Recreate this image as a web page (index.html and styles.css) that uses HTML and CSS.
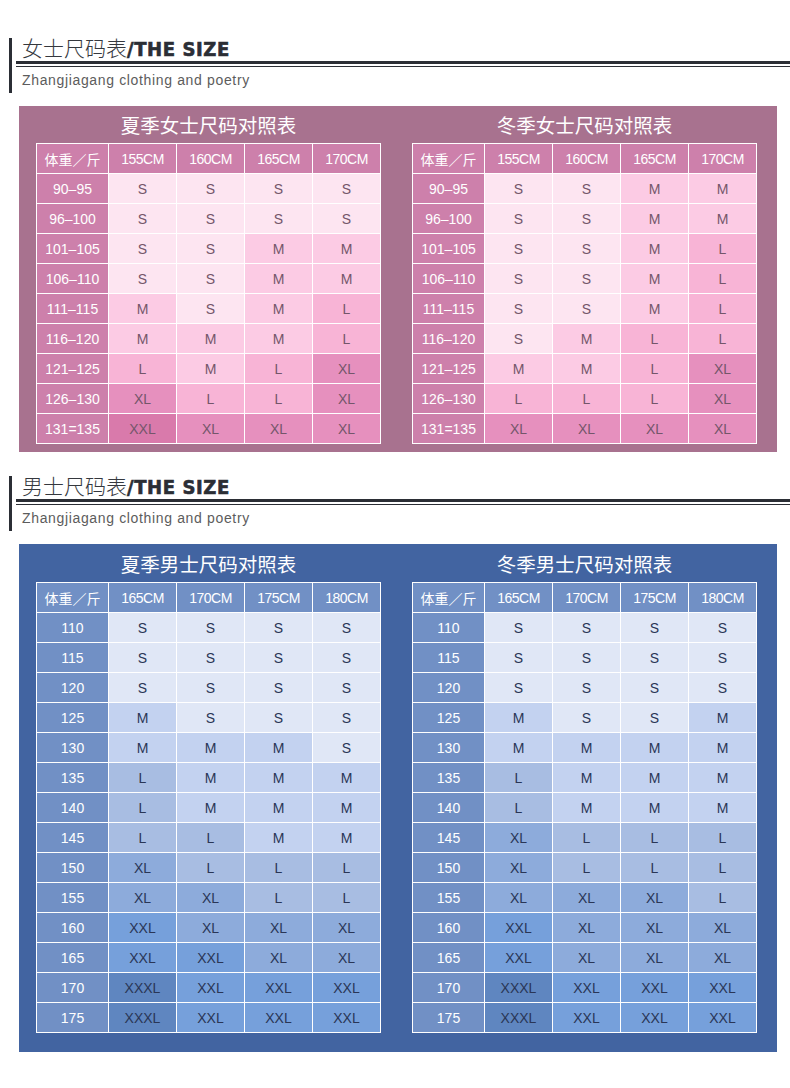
FILE: index.html
```html
<!DOCTYPE html>
<html lang="zh-CN">
<head>
<meta charset="utf-8">
<title>尺码表</title>
<link rel="stylesheet" href="styles.css">
</head>
<body>

<section class="sec-head first">
  <div class="title">女士尺码表<span class="en">/THE SIZE</span></div>
  <div class="rule"></div>
  <div class="sub">Zhangjiagang clothing and poetry</div>
</section>

<div class="panel pink">
  <div class="block">
    <div class="cap">夏季女士尺码对照表</div>
    <table class="chart">
      <colgroup><col class="c0"><col><col><col><col></colgroup>
      <tr class="head"><td>体重／斤</td><td>155CM</td><td>160CM</td><td>165CM</td><td>170CM</td></tr>
      <tr><th>90–95</th><td class="s">S</td><td class="s">S</td><td class="s">S</td><td class="s">S</td></tr>
      <tr><th>96–100</th><td class="s">S</td><td class="s">S</td><td class="s">S</td><td class="s">S</td></tr>
      <tr><th>101–105</th><td class="s">S</td><td class="s">S</td><td class="m">M</td><td class="m">M</td></tr>
      <tr><th>106–110</th><td class="s">S</td><td class="s">S</td><td class="m">M</td><td class="m">M</td></tr>
      <tr><th>111–115</th><td class="m">M</td><td class="s">S</td><td class="m">M</td><td class="l">L</td></tr>
      <tr><th>116–120</th><td class="m">M</td><td class="m">M</td><td class="m">M</td><td class="l">L</td></tr>
      <tr><th>121–125</th><td class="l">L</td><td class="m">M</td><td class="l">L</td><td class="xl">XL</td></tr>
      <tr><th>126–130</th><td class="xl">XL</td><td class="l">L</td><td class="l">L</td><td class="xl">XL</td></tr>
      <tr><th>131=135</th><td class="xxl">XXL</td><td class="xl">XL</td><td class="xl">XL</td><td class="xl">XL</td></tr>
    </table>
  </div>
  <div class="block">
    <div class="cap">冬季女士尺码对照表</div>
    <table class="chart">
      <colgroup><col class="c0"><col><col><col><col></colgroup>
      <tr class="head"><td>体重／斤</td><td>155CM</td><td>160CM</td><td>165CM</td><td>170CM</td></tr>
      <tr><th>90–95</th><td class="s">S</td><td class="s">S</td><td class="m">M</td><td class="m">M</td></tr>
      <tr><th>96–100</th><td class="s">S</td><td class="s">S</td><td class="m">M</td><td class="m">M</td></tr>
      <tr><th>101–105</th><td class="s">S</td><td class="s">S</td><td class="m">M</td><td class="l">L</td></tr>
      <tr><th>106–110</th><td class="s">S</td><td class="s">S</td><td class="m">M</td><td class="l">L</td></tr>
      <tr><th>111–115</th><td class="s">S</td><td class="s">S</td><td class="m">M</td><td class="l">L</td></tr>
      <tr><th>116–120</th><td class="s">S</td><td class="m">M</td><td class="l">L</td><td class="l">L</td></tr>
      <tr><th>121–125</th><td class="m">M</td><td class="m">M</td><td class="l">L</td><td class="xl">XL</td></tr>
      <tr><th>126–130</th><td class="l">L</td><td class="l">L</td><td class="l">L</td><td class="xl">XL</td></tr>
      <tr><th>131=135</th><td class="xl">XL</td><td class="xl">XL</td><td class="xl">XL</td><td class="xl">XL</td></tr>
    </table>
  </div>
</div>

<section class="sec-head second">
  <div class="title">男士尺码表<span class="en">/THE SIZE</span></div>
  <div class="rule"></div>
  <div class="sub">Zhangjiagang clothing and poetry</div>
</section>

<div class="panel blue">
  <div class="block">
    <div class="cap">夏季男士尺码对照表</div>
    <table class="chart">
      <colgroup><col class="c0"><col><col><col><col></colgroup>
      <tr class="head"><td>体重／斤</td><td>165CM</td><td>170CM</td><td>175CM</td><td>180CM</td></tr>
      <tr><th>110</th><td class="s">S</td><td class="s">S</td><td class="s">S</td><td class="s">S</td></tr>
      <tr><th>115</th><td class="s">S</td><td class="s">S</td><td class="s">S</td><td class="s">S</td></tr>
      <tr><th>120</th><td class="s">S</td><td class="s">S</td><td class="s">S</td><td class="s">S</td></tr>
      <tr><th>125</th><td class="m">M</td><td class="s">S</td><td class="s">S</td><td class="s">S</td></tr>
      <tr><th>130</th><td class="m">M</td><td class="m">M</td><td class="m">M</td><td class="s">S</td></tr>
      <tr><th>135</th><td class="l">L</td><td class="m">M</td><td class="m">M</td><td class="m">M</td></tr>
      <tr><th>140</th><td class="l">L</td><td class="m">M</td><td class="m">M</td><td class="m">M</td></tr>
      <tr><th>145</th><td class="l">L</td><td class="l">L</td><td class="m">M</td><td class="m">M</td></tr>
      <tr><th>150</th><td class="xl">XL</td><td class="l">L</td><td class="l">L</td><td class="l">L</td></tr>
      <tr><th>155</th><td class="xl">XL</td><td class="xl">XL</td><td class="l">L</td><td class="l">L</td></tr>
      <tr><th>160</th><td class="xxl">XXL</td><td class="xl">XL</td><td class="xl">XL</td><td class="xl">XL</td></tr>
      <tr><th>165</th><td class="xxl">XXL</td><td class="xxl">XXL</td><td class="xl">XL</td><td class="xl">XL</td></tr>
      <tr><th>170</th><td class="xxxl">XXXL</td><td class="xxl">XXL</td><td class="xxl">XXL</td><td class="xxl">XXL</td></tr>
      <tr><th>175</th><td class="xxxl">XXXL</td><td class="xxl">XXL</td><td class="xxl">XXL</td><td class="xxl">XXL</td></tr>
    </table>
  </div>
  <div class="block">
    <div class="cap">冬季男士尺码对照表</div>
    <table class="chart">
      <colgroup><col class="c0"><col><col><col><col></colgroup>
      <tr class="head"><td>体重／斤</td><td>165CM</td><td>170CM</td><td>175CM</td><td>180CM</td></tr>
      <tr><th>110</th><td class="s">S</td><td class="s">S</td><td class="s">S</td><td class="s">S</td></tr>
      <tr><th>115</th><td class="s">S</td><td class="s">S</td><td class="s">S</td><td class="s">S</td></tr>
      <tr><th>120</th><td class="s">S</td><td class="s">S</td><td class="s">S</td><td class="s">S</td></tr>
      <tr><th>125</th><td class="m">M</td><td class="s">S</td><td class="s">S</td><td class="m">M</td></tr>
      <tr><th>130</th><td class="m">M</td><td class="m">M</td><td class="m">M</td><td class="m">M</td></tr>
      <tr><th>135</th><td class="l">L</td><td class="m">M</td><td class="m">M</td><td class="m">M</td></tr>
      <tr><th>140</th><td class="l">L</td><td class="m">M</td><td class="m">M</td><td class="m">M</td></tr>
      <tr><th>145</th><td class="xl">XL</td><td class="l">L</td><td class="l">L</td><td class="l">L</td></tr>
      <tr><th>150</th><td class="xl">XL</td><td class="l">L</td><td class="l">L</td><td class="l">L</td></tr>
      <tr><th>155</th><td class="xl">XL</td><td class="xl">XL</td><td class="xl">XL</td><td class="l">L</td></tr>
      <tr><th>160</th><td class="xxl">XXL</td><td class="xl">XL</td><td class="xl">XL</td><td class="xl">XL</td></tr>
      <tr><th>165</th><td class="xxl">XXL</td><td class="xl">XL</td><td class="xl">XL</td><td class="xl">XL</td></tr>
      <tr><th>170</th><td class="xxxl">XXXL</td><td class="xxl">XXL</td><td class="xxl">XXL</td><td class="xxl">XXL</td></tr>
      <tr><th>175</th><td class="xxxl">XXXL</td><td class="xxl">XXL</td><td class="xxl">XXL</td><td class="xxl">XXL</td></tr>
    </table>
  </div>
</div>

</body>
</html>
```

FILE: styles.css
```css
* { box-sizing: border-box; }

body {
  margin: 0;
  background: #fff;
  font-family: "Liberation Sans", "Noto Sans CJK SC", sans-serif;
}

/* section heading */
.sec-head {
  margin-left: 9px;
  border-left: 3px solid #2b2e35;
}
.sec-head.first { margin-top: 38px; }
.sec-head.second { margin-top: 24px; }

.title {
  padding-left: 10px;
  height: 23px;
  line-height: 19px;
  font-size: 21px;
  color: #35383e;
  white-space: nowrap;
  font-family: "Noto Sans CJK SC", sans-serif;
  font-weight: 300;
}
.title .en {
  font-family: "DejaVu Sans Condensed", "DejaVu Sans", sans-serif;
  font-stretch: condensed;
  font-weight: 900;
  font-size: 20px;
  letter-spacing: 0.6px;
  color: #2b2e35;
  -webkit-text-stroke: 0.6px #2b2e35;
}

.rule {
  margin-left: 4px;
  height: 6px;
  border-top: 3px solid #2b2e35;
  border-bottom: 1px solid #2b2e35;
}

.sub {
  padding-left: 10px;
  height: 26px;
  line-height: 26px;
  font-size: 14px;
  letter-spacing: 0.65px;
  color: #5c5c5c;
}

/* coloured panels */
.panel {
  margin: 13px 0 0 19px;
  width: 758px;
  padding: 0 20px 8px 17px;
  display: flex;
  gap: 31px;
}
.panel.blue { padding-bottom: 19px; }

.pink { background: #a8728f; }
.blue { background: #4264a1; }

.block { width: 345px; }

.cap {
  height: 37px;
  line-height: 37px;
  text-align: center;
  color: #fff;
  font-size: 19.5px;
  font-family: "Noto Sans CJK SC", sans-serif;
}
.blue .cap { height: 38px; line-height: 40px; }

.chart {
  width: 345px;
  table-layout: fixed;
  border-collapse: separate;
  border-spacing: 1px;
  background: #fff;
}
.chart col.c0 { width: 71px; }
.chart col { width: 67px; }

.chart td,
.chart th {
  height: 29px;
  padding: 0;
  text-align: center;
  font-size: 14px;
  font-weight: normal;
}

.chart .head td {
  color: #fff;
  letter-spacing: -0.5px;
}
.chart .head td:first-child {
  letter-spacing: 0;
  font-family: "Noto Sans CJK SC", sans-serif;
  font-size: 14px;
}
.chart th { color: #fff; }

/* pink palette */
.pink .head td,
.pink th { background: #cd80ab; }
.pink td { color: #74566a; }
.pink .s { background: #fde5f1; }
.pink .m { background: #fccbe4; }
.pink .l { background: #f8b4d6; }
.pink .xl { background: #e690be; }
.pink .xxl { background: #d97aab; }

/* blue palette */
.blue .head td,
.blue th { background: #7190c5; }
.blue td { color: #2a3656; }
.blue .s { background: #e0e7f6; }
.blue .m { background: #c3d2f0; }
.blue .l { background: #a8bde2; }
.blue .xl { background: #8dabdb; }
.blue .xxl { background: #76a0db; }
.blue .xxxl { background: #5f86c0; }
```
